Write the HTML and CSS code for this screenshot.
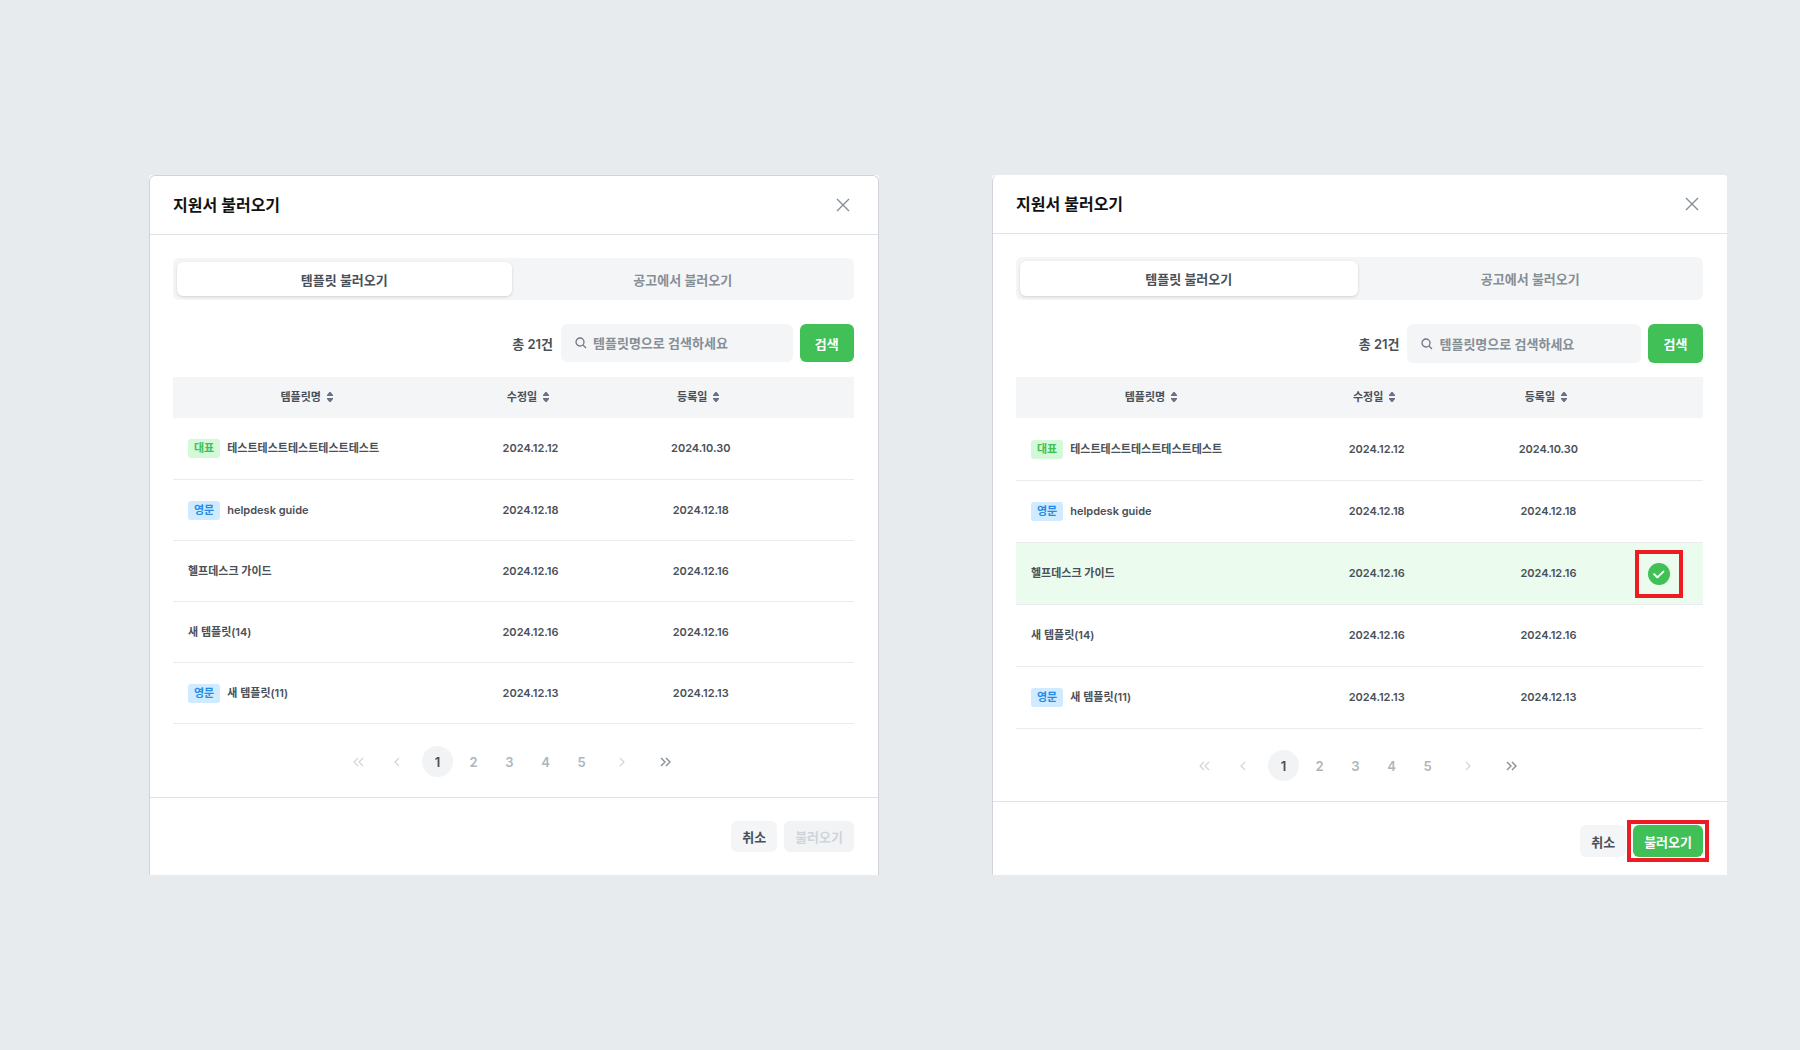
FILE: index.html
```html
<!DOCTYPE html>
<html lang="ko">
<head>
    <meta charset="UTF-8">
    <title>지원서 불러오기</title>
    <link rel="stylesheet" href="styles.css">
</head>
<body>
    <!-- shared icons -->
    <svg class="sprite" width="0" height="0" aria-hidden="true">
        <symbol id="close" viewBox="0 0 14 14"><path d="M1 1l12 12M13 1L1 13" fill="none" stroke="currentColor" stroke-width="1.4"/></symbol>
        <symbol id="search" viewBox="0 0 12 12"><circle cx="5" cy="5" r="4" fill="none" stroke="currentColor" stroke-width="1.3"/><path d="M8 8l3 3" fill="none" stroke="currentColor" stroke-width="1.3"/></symbol>
        <symbol id="sort" viewBox="0 0 6 10"><path d="M0 4h6V3L3.6 0h-1.2L0 3zM0 6h6v1L3.6 10h-1.2L0 7z" fill="currentColor"/></symbol>
        <symbol id="next" viewBox="0 0 6 10"><path d="M1 1l4 4-4 4" fill="none" stroke="currentColor" stroke-width="1.2"/></symbol>
        <symbol id="prev" viewBox="0 0 6 10"><path d="M5 1L1 5l4 4" fill="none" stroke="currentColor" stroke-width="1.2"/></symbol>
        <symbol id="last" viewBox="0 0 11 10"><path d="M1 1l4 4-4 4M6 1l4 4-4 4" fill="none" stroke="currentColor" stroke-width="1.4"/></symbol>
        <symbol id="first" viewBox="0 0 11 10"><path d="M5 1L1 5l4 4M10 1L6 5l4 4" fill="none" stroke="currentColor" stroke-width="1.2"/></symbol>
    </svg>

    <main class="page">
        <!-- nothing selected -->
        <div class="frame">
            <section class="dialog dialog-outlined">
                <header class="dialog-header">
                    <h2>지원서 불러오기</h2>
                    <button type="button" class="close" aria-label="닫기"><svg width="14" height="14"><use href="#close"/></svg></button>
                </header>
                <div class="dialog-body">
                    <div class="tabs">
                        <button type="button" class="tab active">템플릿 불러오기</button>
                        <button type="button" class="tab">공고에서 불러오기</button>
                    </div>
                    <form class="search">
                        <span class="total">총 21건</span>
                        <label class="search-box">
                            <svg width="12" height="12"><use href="#search"/></svg>
                            <input type="text" placeholder="템플릿명으로 검색하세요" aria-label="템플릿명">
                        </label>
                        <button type="button" class="search-btn">검색</button>
                    </form>
                    <table class="list">
                        <thead>
                            <tr>
                                <th class="col-name">템플릿명<svg width="6" height="10"><use href="#sort"/></svg></th>
                                <th class="col-date">수정일<svg width="6" height="10"><use href="#sort"/></svg></th>
                                <th class="col-date">등록일<svg width="6" height="10"><use href="#sort"/></svg></th>
                                <th class="col-check"></th>
                            </tr>
                        </thead>
                        <tbody>
                            <tr><td class="name"><span class="badge green">대표</span>테스트테스트테스트테스트테스트</td><td>2024.12.12</td><td>2024.10.30</td><td></td></tr>
                            <tr><td class="name"><span class="badge blue">영문</span>helpdesk guide</td><td>2024.12.18</td><td>2024.12.18</td><td></td></tr>
                            <tr><td class="name">헬프데스크 가이드</td><td>2024.12.16</td><td>2024.12.16</td><td></td></tr>
                            <tr><td class="name">새 템플릿(14)</td><td>2024.12.16</td><td>2024.12.16</td><td></td></tr>
                            <tr><td class="name"><span class="badge blue">영문</span>새 템플릿(11)</td><td>2024.12.13</td><td>2024.12.13</td><td></td></tr>
                        </tbody>
                    </table>
                    <nav class="paging">
                        <button type="button" class="arrow" aria-label="처음" disabled><svg width="11" height="10"><use href="#first"/></svg></button>
                        <button type="button" class="arrow" aria-label="이전" disabled><svg width="6" height="10"><use href="#prev"/></svg></button>
                        <div class="pages">
                            <button type="button" class="num current">1</button>
                            <button type="button" class="num">2</button>
                            <button type="button" class="num">3</button>
                            <button type="button" class="num">4</button>
                            <button type="button" class="num">5</button>
                        </div>
                        <button type="button" class="arrow" aria-label="다음" disabled><svg width="6" height="10"><use href="#next"/></svg></button>
                        <button type="button" class="arrow" aria-label="마지막"><svg width="11" height="10"><use href="#last"/></svg></button>
                    </nav>
                </div>
                <footer class="dialog-footer">
                    <button type="button" class="btn">취소</button>
                    <button type="button" class="btn" disabled>불러오기</button>
                </footer>
            </section>
        </div>

        <!-- third row selected -->
        <div class="frame">
            <section class="dialog dialog-selected">
                <header class="dialog-header">
                    <h2>지원서 불러오기</h2>
                    <button type="button" class="close" aria-label="닫기"><svg width="14" height="14"><use href="#close"/></svg></button>
                </header>
                <div class="dialog-body">
                    <div class="tabs">
                        <button type="button" class="tab active">템플릿 불러오기</button>
                        <button type="button" class="tab">공고에서 불러오기</button>
                    </div>
                    <form class="search">
                        <span class="total">총 21건</span>
                        <label class="search-box">
                            <svg width="12" height="12"><use href="#search"/></svg>
                            <input type="text" placeholder="템플릿명으로 검색하세요" aria-label="템플릿명">
                        </label>
                        <button type="button" class="search-btn">검색</button>
                    </form>
                    <table class="list">
                        <thead>
                            <tr>
                                <th class="col-name">템플릿명<svg width="6" height="10"><use href="#sort"/></svg></th>
                                <th class="col-date">수정일<svg width="6" height="10"><use href="#sort"/></svg></th>
                                <th class="col-date">등록일<svg width="6" height="10"><use href="#sort"/></svg></th>
                                <th class="col-check"></th>
                            </tr>
                        </thead>
                        <tbody>
                            <tr><td class="name"><span class="badge green">대표</span>테스트테스트테스트테스트테스트</td><td>2024.12.12</td><td>2024.10.30</td><td></td></tr>
                            <tr><td class="name"><span class="badge blue">영문</span>helpdesk guide</td><td>2024.12.18</td><td>2024.12.18</td><td></td></tr>
                            <tr class="selected">
                                <td class="name">헬프데스크 가이드</td><td>2024.12.16</td><td>2024.12.16</td>
                                <td class="check">
                                    <span class="mark mark-check">
                                        <svg width="22" height="22" viewBox="0 0 22 22"><circle cx="11" cy="11" r="11" fill="#40c057"/><path d="M6.2 11.2l3.2 3.2 6-5.8" fill="none" stroke="#fff" stroke-width="2" stroke-linecap="round" stroke-linejoin="round"/></svg>
                                    </span>
                                </td>
                            </tr>
                            <tr><td class="name">새 템플릿(14)</td><td>2024.12.16</td><td>2024.12.16</td><td></td></tr>
                            <tr><td class="name"><span class="badge blue">영문</span>새 템플릿(11)</td><td>2024.12.13</td><td>2024.12.13</td><td></td></tr>
                        </tbody>
                    </table>
                    <nav class="paging">
                        <button type="button" class="arrow" aria-label="처음" disabled><svg width="11" height="10"><use href="#first"/></svg></button>
                        <button type="button" class="arrow" aria-label="이전" disabled><svg width="6" height="10"><use href="#prev"/></svg></button>
                        <div class="pages">
                            <button type="button" class="num current">1</button>
                            <button type="button" class="num">2</button>
                            <button type="button" class="num">3</button>
                            <button type="button" class="num">4</button>
                            <button type="button" class="num">5</button>
                        </div>
                        <button type="button" class="arrow" aria-label="다음" disabled><svg width="6" height="10"><use href="#next"/></svg></button>
                        <button type="button" class="arrow" aria-label="마지막"><svg width="11" height="10"><use href="#last"/></svg></button>
                    </nav>
                </div>
                <footer class="dialog-footer">
                    <button type="button" class="btn">취소</button>
                    <span class="mark mark-btn"><button type="button" class="btn primary">불러오기</button></span>
                </footer>
            </section>
        </div>
    </main>
</body>
</html>
```
FILE: styles.css
```css
* {
    box-sizing: border-box;
}

body {
    margin: 0;
    background-color: #e7ebee;
    color: #495057;
    font-family: Inter, "Noto Sans CJK KR", sans-serif;
    font-size: 13px;
    font-weight: 600;
}

button,
input {
    font: inherit;
    color: inherit;
    border: none;
    padding: 0;
    background: none;
}

button {
    cursor: pointer;
}

svg {
    display: block;
}

.sprite {
    position: absolute;
}

.page {
    display: grid;
    grid-template-columns: 730fr 735fr;
    gap: 113px;
    padding: 175px 73px 175px 149px;
}

.frame {
    background-color: #fff;
    border-radius: 3px 3px 0 0;
}

.dialog {
    --tab: 34px;
    --row: 61px;
    --control: 38px;
    --btn: 31px;
    --gap: 15px;
    height: 100%;
    background-color: #fff;
    border-left: 1px solid #ced4da;
    border-radius: 6px 6px 0 0;
}

.dialog-outlined {
    border-top: 1px solid #ced4da;
    border-right: 1px solid #ced4da;
}

.dialog-selected {
    --tab: 35px;
    --row: 62px;
    --control: 39px;
    --btn: 32px;
    --gap: 14px;
}

/* header */
.dialog-header {
    display: flex;
    justify-content: space-between;
    align-items: center;
    height: 59px;
    padding: 0 28px 0 23px;
    border-bottom: 1px solid #dee2e6;
}

.dialog-header h2 {
    margin: 0;
    font-size: 16px;
    font-weight: 600;
    line-height: 24px;
    color: #111;
}

.close {
    color: #868e96;
}

.dialog-body {
    padding: 23px 24px 20px 23px;
}

/* tabs */
.tabs {
    display: flex;
    gap: 4px;
    padding: 4px;
    margin-bottom: 24px;
    border-radius: 6px;
    background-color: #f4f5f7;
}

.tab {
    flex: 1;
    height: var(--tab);
    border-radius: 6px;
    color: #868e96;
}

.tab.active {
    background-color: #fff;
    color: #495057;
    box-shadow: 0 1px 3px rgba(0, 0, 0, 0.15);
}

/* search */
.search {
    display: flex;
    justify-content: flex-end;
    align-items: center;
    margin-bottom: var(--gap);
}

.search-box {
    display: flex;
    align-items: center;
    gap: 6px;
    width: 34%;
    height: var(--control);
    margin: 0 7px 0 8px;
    padding: 0 14px;
    border-radius: 6px;
    background-color: #f4f5f7;
    color: #71758a;
}

.search-box input {
    flex: 1;
    min-width: 0;
    outline: none;
}

.search-box input::placeholder {
    color: #868e96;
    opacity: 1;
}

.search-btn {
    width: 8%;
    height: var(--control);
    border-radius: 6px;
    background-color: #40c057;
    color: #fff;
    font-weight: 700;
}

/* table */
.list {
    width: 100%;
    table-layout: fixed;
    border-collapse: separate;
    border-spacing: 0;
    font-size: 11px;
    line-height: 19px;
    text-align: center;
}

.list th {
    height: 41px;
    padding: 0 5px 0 0;
    background-color: #f4f5f7;
    font-weight: 600;
}

.list th svg {
    display: inline-block;
    margin-left: 6px;
    vertical-align: -1px;
    color: #6b7088;
}

.col-name {
    width: 40%;
}

.col-date {
    width: 25%;
}

.col-check {
    width: 10%;
}

.list td {
    height: var(--row);
    padding: 0;
    border-bottom: 1px solid #e9ecef;
}

.list tr:first-child td {
    height: calc(var(--row) + 1px);
}

.list .name {
    padding-left: 15px;
    text-align: left;
}

.list .check {
    padding-left: 14px;
    text-align: left;
}

.selected {
    background-color: #ebfbee;
}

.badge {
    display: inline-block;
    margin-right: 7px;
    padding: 0 6px;
    border-radius: 3px;
}

.badge.green {
    background-color: #d3f9d8;
    color: #40c057;
}

.badge.blue {
    background-color: #d0ebff;
    color: #228be6;
}

/* paging */
.paging {
    display: flex;
    justify-content: center;
    align-items: center;
    gap: 7px;
    margin-top: 22px;
}

.dialog-selected .paging {
    margin-top: 21px;
}

.pages {
    display: flex;
    gap: 5px;
}

.num {
    width: 31px;
    height: 31px;
    border-radius: 50%;
    color: #adb5bd;
}

.num.current {
    background-color: #f1f3f5;
    color: #495057;
}

.arrow {
    display: flex;
    justify-content: center;
    align-items: center;
    width: 36px;
    height: 31px;
    color: #868e96;
}

.arrow:first-child {
    width: 28px;
}

.arrow:disabled {
    color: #ced4da;
}

/* footer */
.dialog-footer {
    display: flex;
    justify-content: flex-end;
    gap: 7px;
    padding: 23px 24px 23px 23px;
    border-top: 1px solid #dee2e6;
}

.dialog-selected .dialog-footer {
    padding-bottom: 18px;
}

.btn {
    display: block;
    height: var(--btn);
    padding: 0 11px;
    border-radius: 6px;
    background-color: #f4f5f7;
}

.btn:disabled {
    background-color: #f1f3f5;
    color: #ced4da;
}

.btn.primary {
    background-color: #40c057;
    color: #fff;
}

/* red guide boxes */
.mark {
    display: inline-block;
    position: relative;
    vertical-align: middle;
}

.mark::after {
    content: "";
    position: absolute;
    border: 4px solid #ed1c24;
    pointer-events: none;
}

.mark-check::after {
    inset: -13px;
}

.mark-btn::after {
    inset: -5px -6px;
}
```
